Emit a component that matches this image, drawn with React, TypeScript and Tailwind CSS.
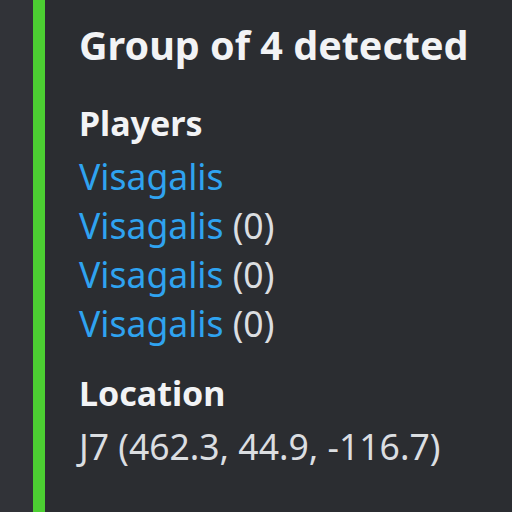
export default function App() {
  const players = [
    { name: 'Visagalis', score: null },
    { name: 'Visagalis', score: 0 },
    { name: 'Visagalis', score: 0 },
    { name: 'Visagalis', score: 0 },
  ];

  return (
    <div className="h-[512px] w-[512px] overflow-hidden bg-[#313338] pl-[33px] flex" style={{ fontFamily: '"Noto Sans", "Open Sans", sans-serif' }}>
      <div className="w-[12px] bg-[#4ccf32] shrink-0" />
      <div className="flex-1 bg-[#2b2d31] pl-[34px] pt-[18px] text-[#dbdee1]">
        <h1 className="text-[39.5px] leading-[54px] font-bold text-[#f2f3f5]">Group of 4 detected</h1>

        <div className="mt-[26px]">
          <div className="text-[34px] leading-[50px] mb-[4px] font-bold text-[#f2f3f5]">Players</div>
          <div className="text-[35.5px] leading-[49px]">
            {players.map((p, i) => (
              <div key={i}>
                <span className="text-[#2fa3f0]">{p.name}</span>
                {p.score !== null && <span> ({p.score})</span>}
              </div>
            ))}
          </div>
        </div>

        <div className="mt-[20px]">
          <div className="text-[34px] leading-[50px] mb-[4px] font-bold text-[#f2f3f5]">Location</div>
          <div className="text-[35.5px] leading-[49px]">J7 (462.3, 44.9, -116.7)</div>
        </div>
      </div>
    </div>
  );
}
